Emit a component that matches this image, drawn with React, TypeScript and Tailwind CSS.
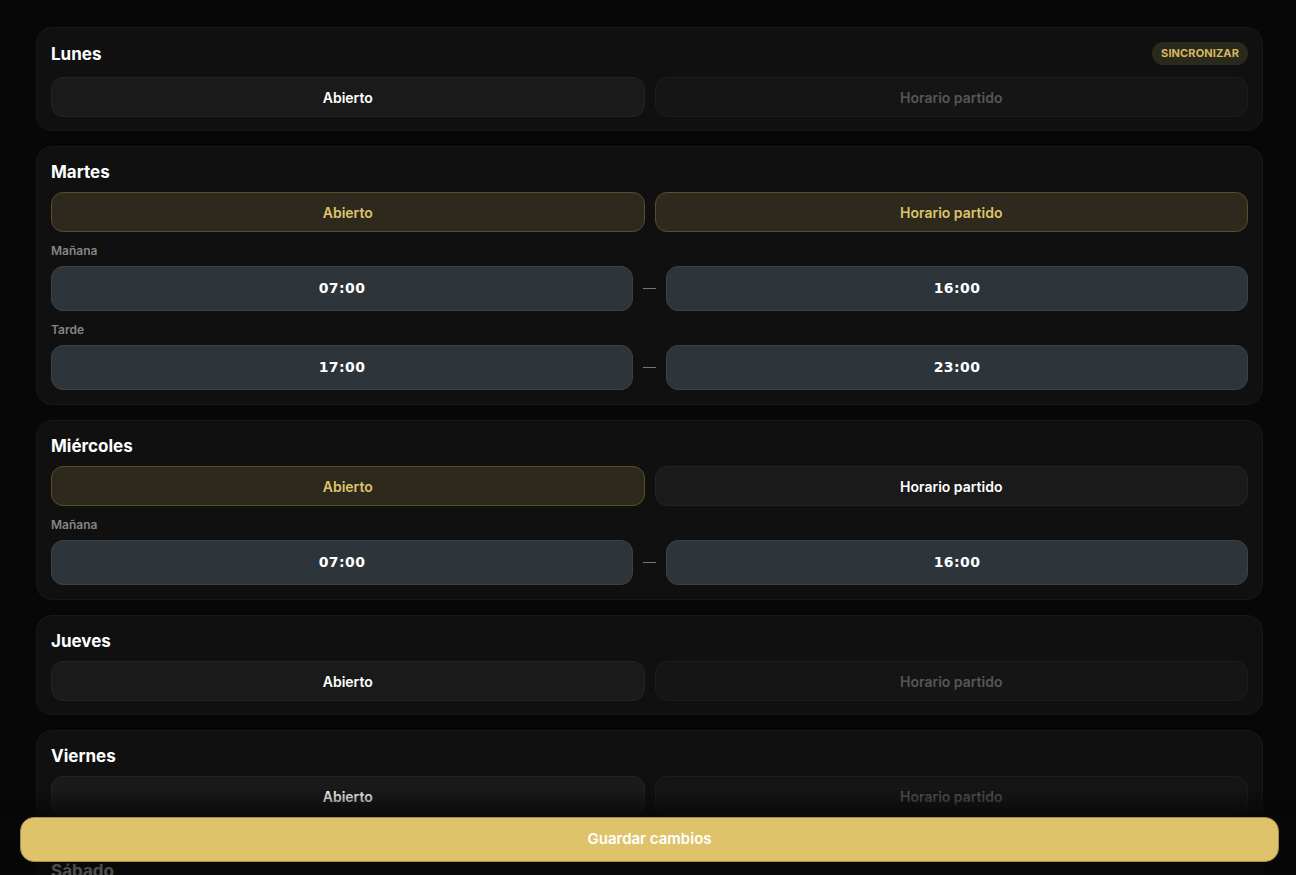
import { useState } from "react";

type Range = { from: string; to: string };

interface Day {
  name: string;
  open: boolean;
  split: boolean;
  ranges: Range[];
}

const initialDays: Day[] = [
  { name: "Lunes", open: false, split: false, ranges: [] },
  {
    name: "Martes",
    open: true,
    split: true,
    ranges: [
      { from: "07:00", to: "16:00" },
      { from: "17:00", to: "23:00" },
    ],
  },
  {
    name: "Miércoles",
    open: true,
    split: false,
    ranges: [{ from: "07:00", to: "16:00" }],
  },
  { name: "Jueves", open: false, split: false, ranges: [] },
  { name: "Viernes", open: false, split: false, ranges: [] },
  { name: "Sábado", open: false, split: false, ranges: [] },
  { name: "Domingo", open: false, split: false, ranges: [] },
];

const ToggleButton = ({
  label,
  active,
  disabled,
  onClick,
}: {
  label: string;
  active: boolean;
  disabled?: boolean;
  onClick: () => void;
}) => {
  const tone = active
    ? "bg-[#2d291d] border-[#5a4d2a] text-[#dfc36b]"
    : disabled
      ? "bg-[#151515] border-[#1d1d1d] text-[#565656]"
      : "bg-[#1a1a1a] border-[#242424] text-white";

  return (
    <button
      onClick={onClick}
      disabled={disabled}
      className={`flex-1 h-[40px] rounded-[12px] border text-[14px] font-semibold ${tone}`}
    >
      {label}
    </button>
  );
};

const TimeBox = ({ value }: { value: string }) => (
  <div className="flex-1 h-[45px] rounded-[12px] bg-[#2d343a] border border-[#3a4248] flex items-center justify-center text-white text-[14px] font-bold tracking-[0.03em] font-['DejaVu_Sans',sans-serif]">
    {value}
  </div>
);

const DayCard = ({
  day,
  showSync,
  onToggleOpen,
  onToggleSplit,
}: {
  day: Day;
  showSync?: boolean;
  onToggleOpen: () => void;
  onToggleSplit: () => void;
}) => {
  const labels = ["Mañana", "Tarde"];

  return (
    <div
      className={`rounded-[16px] bg-[#101010] border border-[#181818] px-[14px] pt-[14px] ${day.open ? "pb-[14px]" : "pb-[13px]"}`}
    >
      <div
        className={`flex items-center justify-between ${showSync ? "h-[23px] mb-[12px]" : "h-[22px] mb-[9px]"}`}
      >
        <h2 className="text-white text-[17px] font-bold leading-[22px]">
          {day.name}
        </h2>
        {showSync && (
          <span className="h-[23px] px-[9px] rounded-full bg-[#2b281c] text-[#d4b85f] text-[11px] font-bold tracking-[0.01em] flex items-center">
            SINCRONIZAR
          </span>
        )}
      </div>

      <div className="flex gap-[10px]">
        <ToggleButton label="Abierto" active={day.open} onClick={onToggleOpen} />
        <ToggleButton
          label="Horario partido"
          active={day.split}
          disabled={!day.open}
          onClick={onToggleSplit}
        />
      </div>

      {day.open &&
        day.ranges.map((r, i) => (
          <div key={i} className="mt-[11px]">
            <div className="text-[#858585] text-[12px] font-semibold leading-4">
              {labels[i]}
            </div>
            <div className="mt-[7px] flex items-center gap-[10px]">
              <TimeBox value={r.from} />
              <div className="w-[13px] h-[1.5px] bg-[#777]" />
              <TimeBox value={r.to} />
            </div>
          </div>
        ))}
    </div>
  );
};

export default function App() {
  const [days, setDays] = useState<Day[]>(initialDays);

  const update = (idx: number, fn: (d: Day) => Day) =>
    setDays((prev) => prev.map((d, i) => (i === idx ? fn(d) : d)));

  return (
    <div className="min-h-screen bg-[#070707] font-['Inter',sans-serif]">
      <div className="pl-[36px] pr-[33px] pt-[27px] pb-[100px] flex flex-col gap-[15px]">
        {days.map((day, idx) => (
          <DayCard
            key={day.name}
            day={day}
            showSync={idx === 0}
            onToggleOpen={() =>
              update(idx, (d) => ({
                ...d,
                open: !d.open,
                ranges: d.ranges.length ? d.ranges : [{ from: "07:00", to: "16:00" }],
              }))
            }
            onToggleSplit={() =>
              update(idx, (d) => ({
                ...d,
                split: !d.split,
                ranges: !d.split
                  ? [d.ranges[0] ?? { from: "07:00", to: "16:00" }, { from: "17:00", to: "23:00" }]
                  : d.ranges.slice(0, 1),
              }))
            }
          />
        ))}
      </div>

      {/* save bar, fading the list out behind it */}
      <div className="fixed bottom-0 left-0 right-0 pl-[20px] pr-[17px] pt-[28px] pb-[13px] bg-[linear-gradient(to_bottom,rgba(7,7,7,0)_0%,rgba(7,7,7,0.85)_33%,rgba(7,7,7,0.7)_100%)]">
        <button className="w-full h-[45px] rounded-[14px] bg-[#dfc36b] border border-[#a88e45] text-white text-[15px] font-semibold">
          Guardar cambios
        </button>
      </div>
    </div>
  );
}
